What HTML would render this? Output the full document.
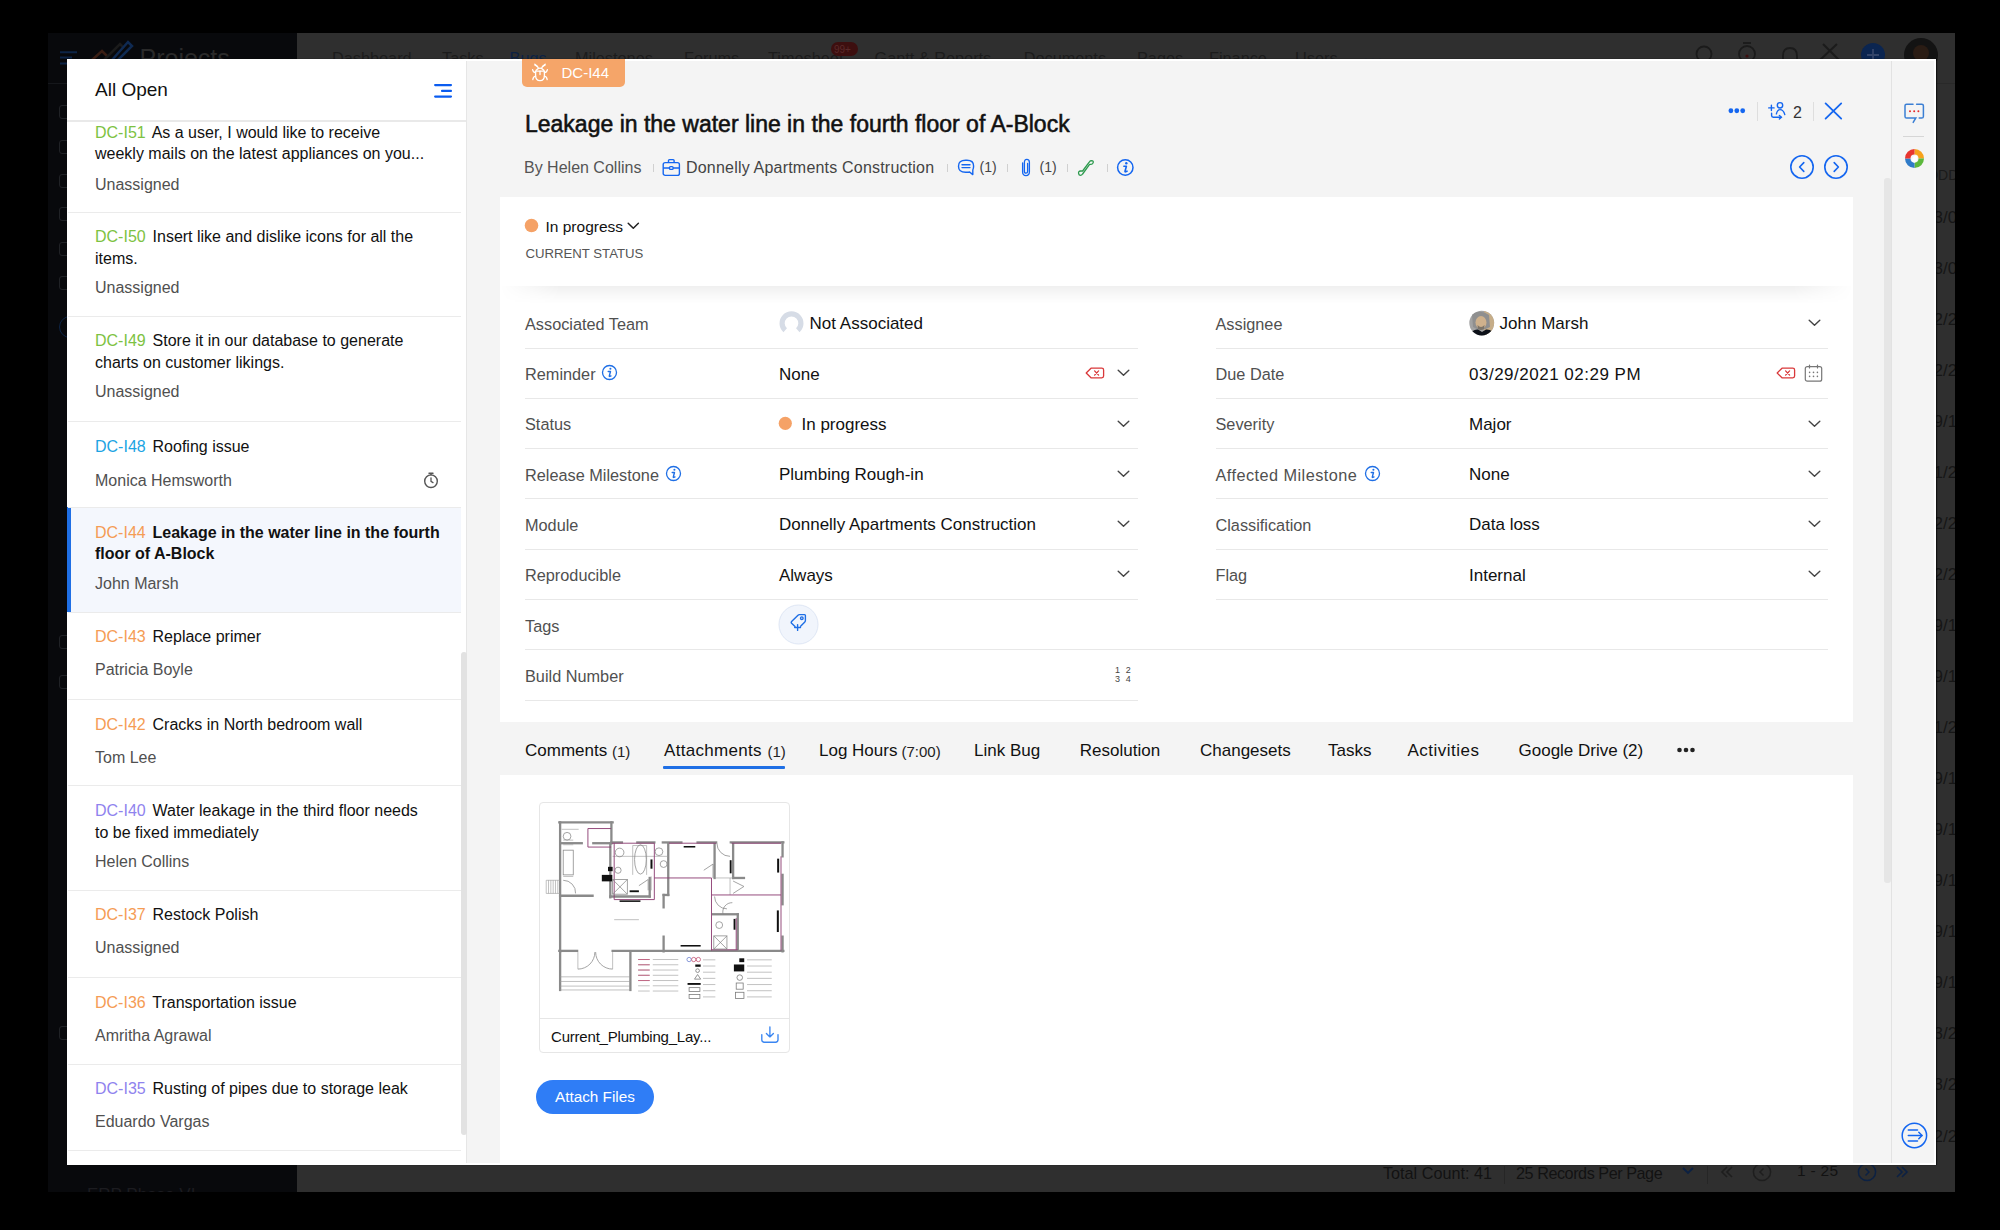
<!DOCTYPE html>
<html><head><meta charset="utf-8"><style>
*{margin:0;padding:0;box-sizing:border-box}
html,body{width:2000px;height:1230px;overflow:hidden;background:#000;font-family:"Liberation Sans",sans-serif}
.r{position:absolute;display:block}
.t{position:absolute;white-space:nowrap}
</style></head><body>
<div class="r" style="left:48px;top:33px;width:249px;height:1159px;background:#08090c;"></div>
<div class="r" style="left:297px;top:33px;width:1658px;height:1159px;background:#2f2f2f;"></div>
<div class="r" style="left:48px;top:33px;width:1907px;height:1159px;overflow:hidden"><div class="r" style="left:-48px;top:-33px;width:2000px;height:1230px"><div class="r" style="left:48px;top:83px;width:249px;height:1px;background:#15171b;"></div>
<div class="r" style="left:297px;top:83px;width:1658px;height:1px;background:#292929;"></div>
<svg class="r" style="left:58px;top:50px;" width="24" height="16" viewBox="0 0 24 16" fill="none"><path d="M2 2.3H19M2 7.5H14M2 13.5H19" stroke="#0d2446" stroke-width="2"/></svg>
<svg class="r" style="left:90px;top:38px;" width="45" height="24" viewBox="0 0 45 24" fill="none"><path d="M2 22L12 13L18 19" stroke="#3a1e14" stroke-width="2.5" fill="none"/><path d="M14 22L30 6L34 10" stroke="#1b1b1b" stroke-width="2.5" fill="none"/><path d="M22 22L38 4L42 8L26 24" stroke="#0f2a52" stroke-width="2.5" fill="none"/></svg>
<div class="t" style="left:139.5px;top:46.34px;font-size:25px;line-height:25px;color:#2a2a2a;font-weight:400;">Projects</div>
<div class="t" style="left:332.0px;top:50.20px;font-size:16.3px;line-height:16.3px;color:#1c1c1c;font-weight:400;">Dashboard</div>
<div class="t" style="left:442.0px;top:50.20px;font-size:16.3px;line-height:16.3px;color:#1c1c1c;font-weight:400;">Tasks</div>
<div class="t" style="left:509.6px;top:50.20px;font-size:16.3px;line-height:16.3px;color:#0c2143;font-weight:400;">Bugs</div>
<div class="t" style="left:575.0px;top:50.20px;font-size:16.3px;line-height:16.3px;color:#1c1c1c;font-weight:400;">Milestones</div>
<div class="t" style="left:684.0px;top:50.20px;font-size:16.3px;line-height:16.3px;color:#1c1c1c;font-weight:400;">Forums</div>
<div class="t" style="left:768.0px;top:50.20px;font-size:16.3px;line-height:16.3px;color:#1c1c1c;font-weight:400;">Timesheet</div>
<div class="t" style="left:874.5px;top:50.20px;font-size:16.3px;line-height:16.3px;color:#1c1c1c;font-weight:400;">Gantt &amp; Reports</div>
<div class="t" style="left:1023.7px;top:50.20px;font-size:16.3px;line-height:16.3px;color:#1c1c1c;font-weight:400;">Documents</div>
<div class="t" style="left:1137.0px;top:50.20px;font-size:16.3px;line-height:16.3px;color:#1c1c1c;font-weight:400;">Pages</div>
<div class="t" style="left:1209.0px;top:50.20px;font-size:16.3px;line-height:16.3px;color:#1c1c1c;font-weight:400;">Finance</div>
<div class="t" style="left:1295.0px;top:50.20px;font-size:16.3px;line-height:16.3px;color:#1c1c1c;font-weight:400;">Users</div>
<svg class="r" style="left:1363px;top:58px;" width="22" height="6" viewBox="0 0 22 6" fill="none"><circle cx="3" cy="3" r="2.2" fill="#0c2143"/><circle cx="10" cy="3" r="2.2" fill="#0c2143"/><circle cx="17" cy="3" r="2.2" fill="#0c2143"/></svg>
<div class="r" style="left:831px;top:42px;width:27px;height:14px;background:#3d0f0f;border-radius:7px"></div>
<div class="t" style="left:834.0px;top:44.53px;font-size:10px;line-height:10px;color:#5a2a2a;font-weight:400;">99+</div>
<svg class="r" style="left:1690px;top:42px;" width="30" height="20" viewBox="0 0 30 20" fill="none"><circle cx="14" cy="12" r="7.5" stroke="#1b1b1b" stroke-width="1.8" fill="none"/></svg>
<svg class="r" style="left:1732px;top:40px;" width="30" height="22" viewBox="0 0 30 22" fill="none"><circle cx="15" cy="14" r="8" stroke="#1b1b1b" stroke-width="1.8" fill="none"/><path d="M11 3H19" stroke="#1b1b1b" stroke-width="1.8"/><circle cx="15" cy="16" r="1.6" fill="#3d0f0f"/></svg>
<svg class="r" style="left:1775px;top:42px;" width="30" height="20" viewBox="0 0 30 20" fill="none"><path d="M8 20V14Q8 6 15 6Q22 6 22 14V20" stroke="#1b1b1b" stroke-width="1.8" fill="none"/></svg>
<svg class="r" style="left:1815px;top:40px;" width="30" height="22" viewBox="0 0 30 22" fill="none"><path d="M5 20L22 4M8 4L24 20" stroke="#1b1b1b" stroke-width="2" fill="none"/></svg>
<svg class="r" style="left:1858px;top:40px;" width="30" height="22" viewBox="0 0 30 22" fill="none"><circle cx="15" cy="15" r="12" fill="#0b2550"/><path d="M15 9V21M9 15H21" stroke="#33456a" stroke-width="1.8"/></svg>
<svg class="r" style="left:1903px;top:37px;" width="36" height="24" viewBox="0 0 36 24" fill="none"><circle cx="18" cy="18" r="17" fill="#131313"/><circle cx="18" cy="16" r="8" fill="#2a1c14"/></svg>
<div class="t" style="left:1928.0px;top:168.15px;font-size:14px;line-height:14px;color:#1a1a1a;font-weight:400;">DDD</div>
<div class="t" style="left:1924.0px;top:208.61px;font-size:17px;line-height:17px;color:#161616;font-weight:400;">03/0</div>
<div class="t" style="left:1924.0px;top:259.66px;font-size:17px;line-height:17px;color:#161616;font-weight:400;">03/0</div>
<div class="t" style="left:1924.0px;top:310.71px;font-size:17px;line-height:17px;color:#161616;font-weight:400;">02/2</div>
<div class="t" style="left:1924.0px;top:361.76px;font-size:17px;line-height:17px;color:#161616;font-weight:400;">02/2</div>
<div class="t" style="left:1924.0px;top:412.81px;font-size:17px;line-height:17px;color:#161616;font-weight:400;">09/1</div>
<div class="t" style="left:1924.0px;top:463.86px;font-size:17px;line-height:17px;color:#161616;font-weight:400;">01/2</div>
<div class="t" style="left:1924.0px;top:514.91px;font-size:17px;line-height:17px;color:#161616;font-weight:400;">02/2</div>
<div class="t" style="left:1924.0px;top:565.96px;font-size:17px;line-height:17px;color:#161616;font-weight:400;">02/2</div>
<div class="t" style="left:1924.0px;top:617.01px;font-size:17px;line-height:17px;color:#161616;font-weight:400;">09/1</div>
<div class="t" style="left:1924.0px;top:668.06px;font-size:17px;line-height:17px;color:#161616;font-weight:400;">09/1</div>
<div class="t" style="left:1924.0px;top:719.11px;font-size:17px;line-height:17px;color:#161616;font-weight:400;">01/2</div>
<div class="t" style="left:1924.0px;top:770.16px;font-size:17px;line-height:17px;color:#161616;font-weight:400;">09/1</div>
<div class="t" style="left:1924.0px;top:821.21px;font-size:17px;line-height:17px;color:#161616;font-weight:400;">09/1</div>
<div class="t" style="left:1924.0px;top:872.26px;font-size:17px;line-height:17px;color:#161616;font-weight:400;">09/1</div>
<div class="t" style="left:1924.0px;top:923.31px;font-size:17px;line-height:17px;color:#161616;font-weight:400;">09/1</div>
<div class="t" style="left:1924.0px;top:974.36px;font-size:17px;line-height:17px;color:#161616;font-weight:400;">09/1</div>
<div class="t" style="left:1924.0px;top:1025.41px;font-size:17px;line-height:17px;color:#161616;font-weight:400;">03/2</div>
<div class="t" style="left:1924.0px;top:1076.46px;font-size:17px;line-height:17px;color:#161616;font-weight:400;">03/2</div>
<div class="t" style="left:1924.0px;top:1127.51px;font-size:17px;line-height:17px;color:#161616;font-weight:400;">02/2</div>
<div class="r" style="left:59px;top:105px;width:14px;height:14px;background:transparent;border:1.5px solid #202226;border-radius:3px"></div>
<div class="r" style="left:59px;top:140px;width:14px;height:14px;background:transparent;border:1.5px solid #202226;border-radius:3px"></div>
<div class="r" style="left:59px;top:174px;width:14px;height:14px;background:transparent;border:1.5px solid #202226;border-radius:3px"></div>
<div class="r" style="left:59px;top:207px;width:14px;height:14px;background:transparent;border:1.5px solid #202226;border-radius:3px"></div>
<div class="r" style="left:59px;top:242px;width:14px;height:14px;background:transparent;border:1.5px solid #202226;border-radius:3px"></div>
<div class="r" style="left:59px;top:276px;width:14px;height:14px;background:transparent;border:1.5px solid #202226;border-radius:3px"></div>
<div class="r" style="left:59px;top:635px;width:14px;height:14px;background:transparent;border:1.5px solid #202226;border-radius:3px"></div>
<div class="r" style="left:59px;top:675px;width:14px;height:14px;background:transparent;border:1.5px solid #202226;border-radius:3px"></div>
<div class="r" style="left:59px;top:1026px;width:14px;height:14px;background:transparent;border:1.5px solid #202226;border-radius:3px"></div>
<div class="r" style="left:59px;top:316px;width:22px;height:22px;background:transparent;border:1.5px solid #0d2446;border-radius:50%"></div>
<div class="t" style="left:1383.0px;top:1164.59px;font-size:16.2px;line-height:16.2px;color:#121212;font-weight:400;">Total Count: 41</div>
<div class="r" style="left:1504px;top:1166px;width:1px;height:18px;background:#262626;"></div>
<div class="t" style="left:1516.0px;top:1164.59px;font-size:16.2px;line-height:16.2px;color:#121212;font-weight:400;letter-spacing:-0.45px">25 Records Per Page</div>
<svg class="r" style="left:1681px;top:1166px;" width="14" height="10" viewBox="0 0 14 10" fill="none"><path d="M2 2L7 7L12 2" stroke="#0c2143" stroke-width="1.8" fill="none"/></svg>
<div class="r" style="left:1707px;top:1166px;width:1px;height:18px;background:#262626;"></div>
<svg class="r" style="left:1719px;top:1164px;" width="16" height="16" viewBox="0 0 16 16" fill="none"><path d="M8 3L3 8L8 13M13 3L8 8L13 13" stroke="#1e1e1e" stroke-width="1.6" fill="none"/></svg>
<svg class="r" style="left:1752px;top:1162px;" width="20" height="20" viewBox="0 0 20 20" fill="none"><circle cx="10" cy="10" r="8.6" stroke="#1e1e1e" stroke-width="1.5" fill="none"/><path d="M11.5 6.5L8 10L11.5 13.5" stroke="#1e1e1e" stroke-width="1.5" fill="none"/></svg>
<div class="t" style="left:1797.0px;top:1163.38px;font-size:15.5px;line-height:15.5px;color:#121212;font-weight:400;letter-spacing:0.3px">1 - 25</div>
<svg class="r" style="left:1857px;top:1162px;" width="20" height="20" viewBox="0 0 20 20" fill="none"><circle cx="10" cy="10" r="8.6" stroke="#0c2143" stroke-width="1.5" fill="none"/><path d="M8.5 6.5L12 10L8.5 13.5" stroke="#0c2143" stroke-width="1.5" fill="none"/></svg>
<svg class="r" style="left:1894px;top:1164px;" width="16" height="16" viewBox="0 0 16 16" fill="none"><path d="M3 3L8 8L3 13M8 3L13 8L8 13" stroke="#0c2143" stroke-width="1.6" fill="none"/></svg>
<div class="t" style="left:87.0px;top:1185.61px;font-size:17px;line-height:17px;color:#1c1c20;font-weight:400;">ERP Phase VI</div>
</div></div><div class="r" style="left:67px;top:59px;width:1869px;height:1106px;background:#ffffff;box-shadow:1px 0 1px rgba(0,0,0,0.6)"></div>
<div class="r" style="left:467px;top:61px;width:1424px;height:1102px;background:#f4f4f4;"></div>
<div class="r" style="left:1891px;top:61px;width:43px;height:1102px;background:#f4f4f4;border-left:1px solid #e2e2e2"></div>
<div class="r" style="left:0;top:0;width:2000px;height:1230px;overflow:hidden"><div class="t" style="left:95.0px;top:80.42px;font-size:19px;line-height:19px;color:#111;font-weight:400;">All Open</div>
<svg class="r" style="left:432px;top:82px;" width="22" height="18" viewBox="0 0 22 18" fill="none"><path d="M3.1 3.1H19M10 8.9H19M3.1 14.6H19" stroke="#0b5cf0" stroke-width="2.1" stroke-linecap="round"/></svg>
<div class="r" style="left:67px;top:120px;width:400px;height:2px;background:#e9e9e9;"></div>
<div class="r" style="left:466px;top:61px;width:1px;height:1102px;background:#e6e6e6;"></div>
<div class="r" style="left:67px;top:507px;width:394px;height:105px;background:#f4f7fd;"></div>
<div class="r" style="left:67px;top:507px;width:4px;height:105px;background:#1f6fe5;"></div>
<div class="t" style="left:95.0px;top:125.06px;font-size:16px;line-height:16px;color:#111;font-weight:400;letter-spacing:0px"><span style="color:#7dc242;font-weight:400">DC-I51</span><span style="margin-left:2.4px"> </span>As a user, I would like to receive</div>
<div class="t" style="left:95.0px;top:146.26px;font-size:16px;line-height:16px;color:#111;font-weight:400;">weekly mails on the latest appliances on you...</div>
<div class="t" style="left:95.0px;top:176.86px;font-size:16px;line-height:16px;color:#505050;font-weight:400;">Unassigned</div>
<div class="r" style="left:68px;top:212px;width:393px;height:1px;background:#ebebeb;"></div>
<div class="t" style="left:95.0px;top:229.06px;font-size:16px;line-height:16px;color:#111;font-weight:400;letter-spacing:0px"><span style="color:#7dc242;font-weight:400">DC-I50</span><span style="margin-left:2.4px"> </span>Insert like and dislike icons for all the</div>
<div class="t" style="left:95.0px;top:250.66px;font-size:16px;line-height:16px;color:#111;font-weight:400;">items.</div>
<div class="t" style="left:95.0px;top:280.06px;font-size:16px;line-height:16px;color:#505050;font-weight:400;">Unassigned</div>
<div class="r" style="left:68px;top:316px;width:393px;height:1px;background:#ebebeb;"></div>
<div class="t" style="left:95.0px;top:333.46px;font-size:16px;line-height:16px;color:#111;font-weight:400;letter-spacing:0px"><span style="color:#7dc242;font-weight:400">DC-I49</span><span style="margin-left:2.4px"> </span>Store it in our database to generate</div>
<div class="t" style="left:95.0px;top:355.06px;font-size:16px;line-height:16px;color:#111;font-weight:400;">charts on customer likings.</div>
<div class="t" style="left:95.0px;top:384.46px;font-size:16px;line-height:16px;color:#505050;font-weight:400;">Unassigned</div>
<div class="r" style="left:68px;top:421px;width:393px;height:1px;background:#ebebeb;"></div>
<div class="t" style="left:95.0px;top:438.86px;font-size:16px;line-height:16px;color:#111;font-weight:400;letter-spacing:0px"><span style="color:#1ca4e3;font-weight:400">DC-I48</span><span style="margin-left:2.4px"> </span>Roofing issue</div>
<div class="t" style="left:95.0px;top:472.86px;font-size:16px;line-height:16px;color:#505050;font-weight:400;">Monica Hemsworth</div>
<div class="r" style="left:68px;top:507px;width:393px;height:1px;background:#ebebeb;"></div>
<div class="t" style="left:95.0px;top:524.96px;font-size:16px;line-height:16px;color:#111;font-weight:700;letter-spacing:0px"><span style="color:#f59c55;font-weight:400">DC-I44</span><span style="margin-left:2.4px"> </span>Leakage in the water line in the fourth</div>
<div class="t" style="left:95.0px;top:546.26px;font-size:16px;line-height:16px;color:#111;font-weight:700;">floor of A-Block</div>
<div class="t" style="left:95.0px;top:576.26px;font-size:16px;line-height:16px;color:#505050;font-weight:400;">John Marsh</div>
<div class="r" style="left:68px;top:612px;width:393px;height:1px;background:#ebebeb;"></div>
<div class="t" style="left:95.0px;top:629.16px;font-size:16px;line-height:16px;color:#111;font-weight:400;letter-spacing:0px"><span style="color:#f59c55;font-weight:400">DC-I43</span><span style="margin-left:2.4px"> </span>Replace primer</div>
<div class="t" style="left:95.0px;top:662.26px;font-size:16px;line-height:16px;color:#505050;font-weight:400;">Patricia Boyle</div>
<div class="r" style="left:68px;top:699px;width:393px;height:1px;background:#ebebeb;"></div>
<div class="t" style="left:95.0px;top:716.66px;font-size:16px;line-height:16px;color:#111;font-weight:400;letter-spacing:0px"><span style="color:#f59c55;font-weight:400">DC-I42</span><span style="margin-left:2.4px"> </span>Cracks in North bedroom wall</div>
<div class="t" style="left:95.0px;top:750.46px;font-size:16px;line-height:16px;color:#505050;font-weight:400;">Tom Lee</div>
<div class="r" style="left:68px;top:785px;width:393px;height:1px;background:#ebebeb;"></div>
<div class="t" style="left:95.0px;top:803.36px;font-size:16px;line-height:16px;color:#111;font-weight:400;letter-spacing:0px"><span style="color:#8f83ee;font-weight:400">DC-I40</span><span style="margin-left:2.4px"> </span>Water leakage in the third floor needs</div>
<div class="t" style="left:95.0px;top:824.76px;font-size:16px;line-height:16px;color:#111;font-weight:400;">to be fixed immediately</div>
<div class="t" style="left:95.0px;top:854.06px;font-size:16px;line-height:16px;color:#505050;font-weight:400;">Helen Collins</div>
<div class="r" style="left:68px;top:890px;width:393px;height:1px;background:#ebebeb;"></div>
<div class="t" style="left:95.0px;top:907.46px;font-size:16px;line-height:16px;color:#111;font-weight:400;letter-spacing:0px"><span style="color:#f59c55;font-weight:400">DC-I37</span><span style="margin-left:2.4px"> </span>Restock Polish</div>
<div class="t" style="left:95.0px;top:940.46px;font-size:16px;line-height:16px;color:#505050;font-weight:400;">Unassigned</div>
<div class="r" style="left:68px;top:977px;width:393px;height:1px;background:#ebebeb;"></div>
<div class="t" style="left:95.0px;top:994.56px;font-size:16px;line-height:16px;color:#111;font-weight:400;letter-spacing:0px"><span style="color:#f59c55;font-weight:400">DC-I36</span><span style="margin-left:2.4px"> </span>Transportation issue</div>
<div class="t" style="left:95.0px;top:1027.76px;font-size:16px;line-height:16px;color:#505050;font-weight:400;">Amritha Agrawal</div>
<div class="r" style="left:68px;top:1064px;width:393px;height:1px;background:#ebebeb;"></div>
<div class="t" style="left:95.0px;top:1081.26px;font-size:16px;line-height:16px;color:#111;font-weight:400;letter-spacing:0px"><span style="color:#8f83ee;font-weight:400">DC-I35</span><span style="margin-left:2.4px"> </span>Rusting of pipes due to storage leak</div>
<div class="t" style="left:95.0px;top:1113.66px;font-size:16px;line-height:16px;color:#505050;font-weight:400;">Eduardo Vargas</div>
<div class="r" style="left:68px;top:1150px;width:393px;height:1px;background:#ebebeb;"></div>
<svg class="r" style="left:423px;top:471px;" width="16" height="18" viewBox="0 0 16 18" fill="none"><circle cx="8" cy="10.2" r="6.3" stroke="#555" stroke-width="1.4"/><path d="M8 6.8V10.4L10 11.6" stroke="#555" stroke-width="1.3" stroke-linecap="round"/><path d="M6 2.2H10M8 2.2V3.9" stroke="#555" stroke-width="1.4" stroke-linecap="round"/></svg>
<div class="r" style="left:461px;top:652px;width:6px;height:483px;background:#e2e2e2;border-radius:3px"></div>
<div class="r" style="left:522px;top:59px;width:103px;height:28px;background:#f5a569;border-radius:0 0 5px 5px"></div>
<svg class="r" style="left:531px;top:63px;" width="18" height="19" viewBox="0 0 18 19" fill="none"><g stroke="#fff" stroke-width="1.3" stroke-linecap="round" fill="none">
<path d="M5.2 7.2Q9 3.2 12.8 7.2"/><path d="M4.6 8.2H13.4V12.5Q13.4 17.6 9 17.6Q4.6 17.6 4.6 12.5Z"/>
<path d="M9 8.2V11.5"/><path d="M6.6 3.4L3.8 1.2M11.4 3.4L14.2 1.2"/><path d="M7.2 4.6Q5.6 2.8 4 2.2M10.8 4.6Q12.4 2.8 14 2.2"/>
<path d="M4.6 9.6Q2 9.2 1.6 6.6M13.4 9.6Q16 9.2 16.4 6.6M4.6 13.2Q2.2 13.6 1.8 16.6M13.4 13.2Q15.8 13.6 16.2 16.6"/>
</g></svg>
<div class="t" style="left:561.5px;top:65.30px;font-size:15px;line-height:15px;color:#fff;font-weight:400;">DC-I44</div>
<div class="t" style="left:525.0px;top:112.53px;font-size:23px;line-height:23px;color:#111;font-weight:400;-webkit-text-stroke:0.55px #111">Leakage in the water line in the fourth floor of A-Block</div>
<div class="t" style="left:524.0px;top:160.26px;font-size:16px;line-height:16px;color:#555;font-weight:400;">By Helen Collins</div>
<div class="r" style="left:652.5px;top:164px;width:1.0px;height:8px;background:#d0d0d0;"></div>
<div class="r" style="left:946.5px;top:164px;width:1.0px;height:8px;background:#d0d0d0;"></div>
<div class="r" style="left:1006.5px;top:164px;width:1.0px;height:8px;background:#d0d0d0;"></div>
<div class="r" style="left:1066.5px;top:164px;width:1.0px;height:8px;background:#d0d0d0;"></div>
<div class="r" style="left:1106.5px;top:164px;width:1.0px;height:8px;background:#d0d0d0;"></div>
<svg class="r" style="left:662px;top:158px;" width="19" height="19" viewBox="0 0 19 19" fill="none"><g stroke="#1466f0" stroke-width="1.4" fill="none"><rect x="1.2" y="4.6" width="16.2" height="12.8" rx="2"/><path d="M6.5 4.6V2.6Q6.5 1.6 7.5 1.6H11.1Q12.1 1.6 12.1 2.6V4.6"/><path d="M1.2 10H7.5M11.1 10H17.4"/><rect x="7.5" y="8.6" width="3.6" height="2.8" rx="1"/></g></svg>
<div class="t" style="left:686.0px;top:160.26px;font-size:16px;line-height:16px;color:#444;font-weight:400;letter-spacing:0.2px">Donnelly Apartments Construction</div>
<svg class="r" style="left:957px;top:159px;" width="18" height="17" viewBox="0 0 18 17" fill="none"><g stroke="#1466f0" stroke-width="1.4" fill="none" stroke-linejoin="round"><path d="M8.6 1.3H10Q16.6 1.3 16.6 7Q16.6 9.6 15.8 11V15.6L12.6 13Q11.4 13.2 10 13.2H8.6Q1.5 13.2 1.5 7.2Q1.5 1.3 8.6 1.3Z"/><path d="M5 5.7H13M5 8.6H13" stroke-linecap="round"/></g></svg>
<div class="t" style="left:979.5px;top:160.35px;font-size:14px;line-height:14px;color:#444;font-weight:400;">(1)</div>
<svg class="r" style="left:1020px;top:158px;" width="12" height="19" viewBox="0 0 12 19" fill="none"><path d="M7.6 5.5V13.6Q7.6 15.2 6 15.2Q4.4 15.2 4.4 13.6V4.4Q4.4 1.4 6.8 1.4Q9.4 1.4 9.4 4.4V13.8Q9.4 17.6 6 17.6Q2.6 17.6 2.6 13.8V5" stroke="#1466f0" stroke-width="1.3" fill="none" stroke-linecap="round"/></svg>
<div class="t" style="left:1039.5px;top:160.35px;font-size:14px;line-height:14px;color:#444;font-weight:400;">(1)</div>
<svg class="r" style="left:1077px;top:159px;" width="18" height="18" viewBox="0 0 18 18" fill="none"><path d="M1.6 14.4Q1.2 12.2 3.6 12H5.6L12.4 2.8Q13.2 1.6 14.6 1.6Q16.6 1.8 16.2 3.6Q15.8 5.2 14 5.4H12.6L5.6 15Q4.8 16.4 3.2 16.4Q1.8 16.2 1.6 14.4Z" stroke="#2d9a4e" stroke-width="1.3" fill="none" stroke-linejoin="round"/></svg>
<svg class="r" style="left:1116px;top:158px;" width="19" height="19" viewBox="0 0 19 19" fill="none"><circle cx="9.3" cy="9.5" r="7.7" stroke="#1466f0" stroke-width="1.5"/><circle cx="10.3" cy="5.3" r="1.2" fill="#1466f0"/><path d="M7.9 8.2H10.4L9 13.2Q8.8 14 9.6 13.8L11 13.2" stroke="#1466f0" stroke-width="1.6" fill="none" stroke-linecap="round" stroke-linejoin="round"/></svg>
<svg class="r" style="left:1726px;top:106px;" width="22" height="10" viewBox="0 0 22 10" fill="none"><circle cx="4.9" cy="4.75" r="2.4" fill="#1466f0"/><circle cx="10.8" cy="4.75" r="2.4" fill="#1466f0"/><circle cx="16.7" cy="4.75" r="2.4" fill="#1466f0"/></svg>
<div class="r" style="left:1757px;top:102px;width:1px;height:19px;background:#dedede;"></div>
<svg class="r" style="left:1767px;top:100px;" width="22" height="20" viewBox="0 0 22 20" fill="none"><g stroke="#1466f0" stroke-width="1.4" fill="none" stroke-linecap="round"><path d="M4.4 5.2V10.6M1.7 7.9H7.1"/><circle cx="13" cy="5.3" r="2.7"/><path d="M9.4 13.8Q10.4 9.6 13 9.6Q16.4 9.6 17.8 14.6"/><path d="M4.6 13.2V15.6Q4.6 17.2 6.2 17.2H14"/><path d="M12.4 15.4L14.4 17.2L12.4 19"/></g></svg>
<div class="t" style="left:1793.0px;top:104.56px;font-size:16px;line-height:16px;color:#333;font-weight:400;">2</div>
<div class="r" style="left:1813px;top:102px;width:1px;height:19px;background:#dedede;"></div>
<svg class="r" style="left:1823px;top:101px;" width="21" height="20" viewBox="0 0 21 20" fill="none"><path d="M2.6 2.4L18.2 17.6M18.2 2.4L2.6 17.6" stroke="#1466f0" stroke-width="1.8" stroke-linecap="round"/></svg>
<svg class="r" style="left:1789px;top:154px;" width="26" height="26" viewBox="0 0 26 26" fill="none"><circle cx="13" cy="13" r="11.2" stroke="#1466f0" stroke-width="1.6"/><path d="M14.8 8.6L10.6 13L14.8 17.4" stroke="#1466f0" stroke-width="1.6" fill="none" stroke-linecap="round" stroke-linejoin="round"/></svg>
<svg class="r" style="left:1823px;top:154px;" width="26" height="26" viewBox="0 0 26 26" fill="none"><circle cx="13" cy="13" r="11.2" stroke="#1466f0" stroke-width="1.6"/><path d="M11.2 8.6L15.4 13L11.2 17.4" stroke="#1466f0" stroke-width="1.6" fill="none" stroke-linecap="round" stroke-linejoin="round"/></svg>
<svg class="r" style="left:1902px;top:101px;" width="24" height="24" viewBox="0 0 24 24" fill="none"><path d="M11 3.2H4.6Q3 3.2 3 4.8V15.4Q3 17 4.6 17H13.8L11.2 21.4M17.2 17H19.6Q21.4 17 21.4 15.4V4.8Q21.4 3.2 19.8 3.2H14.6" stroke="#3b7fd4" stroke-width="1.5" fill="none" stroke-linecap="round"/><circle cx="8" cy="10.3" r="1" fill="#e52b2b"/><circle cx="12.2" cy="10.3" r="1" fill="#e52b2b"/><circle cx="16.4" cy="10.3" r="1" fill="#e52b2b"/></svg>
<div class="r" style="left:1903px;top:136px;width:21px;height:1px;background:#d6d6d6;"></div>
<svg class="r" style="left:1904px;top:148px;" width="21" height="21" viewBox="0 0 21 21" fill="none"><g transform="translate(10.5 10.5)">
<path d="M0 -9.5A9.5 9.5 0 0 1 9.5 0L4 0A4 4 0 0 0 0 -4Z" fill="#f7a21b"/>
<path d="M9.5 0A9.5 9.5 0 0 1 0 9.5L0 4A4 4 0 0 0 4 0Z" fill="#5cb83c"/>
<path d="M0 9.5A9.5 9.5 0 0 1 -9.5 0L-4 0A4 4 0 0 0 0 4Z" fill="#2f7bc8"/>
<path d="M-9.5 0A9.5 9.5 0 0 1 0 -9.5L0 -4A4 4 0 0 0 -4 0Z" fill="#e8352e"/>
<ellipse cx="0.5" cy="0.5" rx="2.4" ry="3.6" fill="#fff" transform="rotate(20)"/>
</g></svg>
<svg class="r" style="left:1900px;top:1121px;" width="29" height="29" viewBox="0 0 29 29" fill="none"><circle cx="14.4" cy="14.5" r="12.2" stroke="#1466f0" stroke-width="1.5"/><path d="M8.3 9.1H17.5M8.3 14.5H22M8.3 20.1H17.5" stroke="#1466f0" stroke-width="1.5" stroke-linecap="round"/><path d="M18.8 11.2L22 14.5L18.8 17.8" stroke="#1466f0" stroke-width="1.5" fill="none" stroke-linecap="round" stroke-linejoin="round"/></svg>
<div class="r" style="left:1884px;top:178px;width:7px;height:705px;background:#e6e6e6;border-radius:3px"></div>
<div class="r" style="left:500px;top:197px;width:1353px;height:525px;background:#ffffff;"></div>
<div class="r" style="left:500px;top:286px;width:1353px;height:18px;background:linear-gradient(rgba(0,0,0,0.06),rgba(0,0,0,0.02) 60%,rgba(0,0,0,0));-webkit-mask-image:linear-gradient(to right,transparent 0,#000 60px,#000 calc(100% - 60px),transparent 100%)"></div>
<div class="r" style="left:500px;top:197px;width:1353px;height:89px;z-index:2"><svg class="r" style="left:24px;top:21px;" width="15" height="15" viewBox="0 0 15 15" fill="none"><circle cx="7.5" cy="7.5" r="6.8" fill="#f5a267"/></svg>
<div class="t" style="left:45.5px;top:22.28px;font-size:15.5px;line-height:15.5px;color:#111;font-weight:400;">In progress</div>
<svg class="r" style="left:127px;top:25px;" width="13" height="8" viewBox="0 0 13 8" fill="none"><path d="M1.2 1.2L6.3 6.2L11.4 1.2" stroke="#222" stroke-width="1.5" fill="none" stroke-linecap="round" stroke-linejoin="round"/></svg>
<div class="t" style="left:25.4px;top:49.53px;font-size:13.2px;line-height:13.2px;color:#555;font-weight:400;">CURRENT STATUS</div>
</div><div class="t" style="left:525.0px;top:315.84px;font-size:16.3px;line-height:16.3px;color:#505050;font-weight:400;">Associated Team</div>
<svg class="r" style="left:778px;top:308px;" width="27" height="27" viewBox="0 0 27 27" fill="none"><path d="M7.2 22.2A9.4 9.4 0 1 1 19.8 22.2" stroke="#d6dce6" stroke-width="5.2" fill="none"/></svg>
<div class="t" style="left:809.6px;top:315.25px;font-size:17px;line-height:17px;color:#111;font-weight:400;">Not Associated</div>
<div class="r" style="left:525px;top:348px;width:613px;height:1px;background:#e8e8e8;"></div>
<div class="t" style="left:525.0px;top:366.12px;font-size:16.3px;line-height:16.3px;color:#505050;font-weight:400;">Reminder</div>
<svg class="r" style="left:601px;top:364px;" width="17" height="17" viewBox="0 0 17 17" fill="none"><circle cx="8.5" cy="8.5" r="7" stroke="#1f6fe5" stroke-width="1.3"/><circle cx="9.4" cy="4.8" r="1.05" fill="#1f6fe5"/><path d="M7.2 7.5H9.5L8.3 11.9Q8.1 12.6 8.8 12.4L10 11.9" stroke="#1f6fe5" stroke-width="1.4" fill="none" stroke-linecap="round" stroke-linejoin="round"/></svg>
<div class="t" style="left:779.0px;top:365.53px;font-size:17px;line-height:17px;color:#111;font-weight:400;">None</div>
<svg class="r" style="left:1117px;top:369px;" width="13" height="8" viewBox="0 0 13 8" fill="none"><path d="M1.2 1.2L6.5 6.3L11.8 1.2" stroke="#444" stroke-width="1.4" fill="none" stroke-linecap="round" stroke-linejoin="round"/></svg>
<svg class="r" style="left:1085px;top:367px;" width="20" height="12" viewBox="0 0 20 12" fill="none"><path d="M6 1.2H16.8Q18.6 1.2 18.6 3V9Q18.6 10.8 16.8 10.8H6L1.2 6Z" stroke="#d9383a" stroke-width="1.3" fill="none" stroke-linejoin="round"/><path d="M9.6 3.9L13.6 8.1M13.6 3.9L9.6 8.1" stroke="#d9383a" stroke-width="1.3" stroke-linecap="round"/></svg>
<div class="r" style="left:525px;top:398px;width:613px;height:1px;background:#e8e8e8;"></div>
<div class="t" style="left:525.0px;top:416.40px;font-size:16.3px;line-height:16.3px;color:#505050;font-weight:400;">Status</div>
<svg class="r" style="left:778px;top:416px;" width="15" height="15" viewBox="0 0 15 15" fill="none"><circle cx="7.3" cy="7.3" r="6.6" fill="#f5a267"/></svg>
<div class="t" style="left:801.5px;top:415.81px;font-size:17px;line-height:17px;color:#111;font-weight:400;">In progress</div>
<svg class="r" style="left:1117px;top:420px;" width="13" height="8" viewBox="0 0 13 8" fill="none"><path d="M1.2 1.2L6.5 6.3L11.8 1.2" stroke="#444" stroke-width="1.4" fill="none" stroke-linecap="round" stroke-linejoin="round"/></svg>
<div class="r" style="left:525px;top:448px;width:613px;height:1px;background:#e8e8e8;"></div>
<div class="t" style="left:525.0px;top:466.68px;font-size:16.3px;line-height:16.3px;color:#505050;font-weight:400;">Release Milestone</div>
<svg class="r" style="left:665px;top:465px;" width="17" height="17" viewBox="0 0 17 17" fill="none"><circle cx="8.5" cy="8.5" r="7" stroke="#1f6fe5" stroke-width="1.3"/><circle cx="9.4" cy="4.8" r="1.05" fill="#1f6fe5"/><path d="M7.2 7.5H9.5L8.3 11.9Q8.1 12.6 8.8 12.4L10 11.9" stroke="#1f6fe5" stroke-width="1.4" fill="none" stroke-linecap="round" stroke-linejoin="round"/></svg>
<div class="t" style="left:779.0px;top:466.09px;font-size:17px;line-height:17px;color:#111;font-weight:400;">Plumbing Rough-in</div>
<svg class="r" style="left:1117px;top:470px;" width="13" height="8" viewBox="0 0 13 8" fill="none"><path d="M1.2 1.2L6.5 6.3L11.8 1.2" stroke="#444" stroke-width="1.4" fill="none" stroke-linecap="round" stroke-linejoin="round"/></svg>
<div class="r" style="left:525px;top:498px;width:613px;height:1px;background:#e8e8e8;"></div>
<div class="t" style="left:525.0px;top:516.96px;font-size:16.3px;line-height:16.3px;color:#505050;font-weight:400;">Module</div>
<div class="t" style="left:779.0px;top:516.37px;font-size:17px;line-height:17px;color:#111;font-weight:400;">Donnelly Apartments Construction</div>
<svg class="r" style="left:1117px;top:520px;" width="13" height="8" viewBox="0 0 13 8" fill="none"><path d="M1.2 1.2L6.5 6.3L11.8 1.2" stroke="#444" stroke-width="1.4" fill="none" stroke-linecap="round" stroke-linejoin="round"/></svg>
<div class="r" style="left:525px;top:549px;width:613px;height:1px;background:#e8e8e8;"></div>
<div class="t" style="left:525.0px;top:567.24px;font-size:16.3px;line-height:16.3px;color:#505050;font-weight:400;">Reproducible</div>
<div class="t" style="left:779.0px;top:566.65px;font-size:17px;line-height:17px;color:#111;font-weight:400;">Always</div>
<svg class="r" style="left:1117px;top:570px;" width="13" height="8" viewBox="0 0 13 8" fill="none"><path d="M1.2 1.2L6.5 6.3L11.8 1.2" stroke="#444" stroke-width="1.4" fill="none" stroke-linecap="round" stroke-linejoin="round"/></svg>
<div class="r" style="left:525px;top:599px;width:613px;height:1px;background:#e8e8e8;"></div>
<div class="t" style="left:525.0px;top:617.52px;font-size:16.3px;line-height:16.3px;color:#505050;font-weight:400;">Tags</div>
<svg class="r" style="left:778px;top:604px;" width="41" height="41" viewBox="0 0 41 41" fill="none"><circle cx="20.5" cy="20.5" r="19.5" fill="#f1f5fc" stroke="#dfe7f5" stroke-width="1"/><g stroke="#1f6fe5" stroke-width="1.4" fill="none" stroke-linecap="round" stroke-linejoin="round"><path d="M17 22.6L13.6 19.2Q12.8 18.4 13.6 17.6L20 11.2Q20.6 10.6 21.4 10.6H26.6Q27.4 10.6 27.4 11.4V16.6Q27.4 17.4 26.8 18L22.6 22.2"/><circle cx="23.8" cy="14.2" r="1.3"/><path d="M19.6 20.6V26.4M16.7 23.5H22.5"/></g></svg>
<div class="r" style="left:525px;top:649px;width:1303px;height:1px;background:#e8e8e8;"></div>
<div class="t" style="left:525.0px;top:667.80px;font-size:16.3px;line-height:16.3px;color:#505050;font-weight:400;">Build Number</div>
<div class="t" style="left:1115px;top:666px;font-size:9px;line-height:9px;color:#444;letter-spacing:1.6px">1 2<br>3 4</div>
<div class="r" style="left:525px;top:700px;width:613px;height:1px;background:#e8e8e8;"></div>
<div class="t" style="left:1215.5px;top:315.84px;font-size:16.3px;line-height:16.3px;color:#505050;font-weight:400;">Assignee</div>
<svg class="r" style="left:1469px;top:310px;" width="26" height="26" viewBox="0 0 26 26" fill="none"><defs><clipPath id="av"><circle cx="12.7" cy="13.1" r="12.4"/></clipPath></defs>
<g clip-path="url(#av)"><rect width="26" height="26" fill="#a3a3a3"/><rect x="15" width="11" height="26" fill="#c6ad88"/><path d="M3 4Q12 -1 20 5L21 17Q12 22 4 17Z" fill="#8f8f8f"/><ellipse cx="12" cy="12.5" rx="5.5" ry="6.5" fill="#cfb18c"/><path d="M8.5 15Q12 19 15.5 15L15 19Q12 21 9 19Z" fill="#7c7468"/><path d="M0 26Q3 19 9 19.5L13 22L17 19.5Q24 19 26 26Z" fill="#0c1018"/></g></svg>
<div class="t" style="left:1499.6px;top:315.25px;font-size:17px;line-height:17px;color:#111;font-weight:400;">John Marsh</div>
<svg class="r" style="left:1807.5px;top:319px;" width="13" height="8" viewBox="0 0 13 8" fill="none"><path d="M1.2 1.2L6.5 6.3L11.8 1.2" stroke="#444" stroke-width="1.4" fill="none" stroke-linecap="round" stroke-linejoin="round"/></svg>
<div class="r" style="left:1216px;top:348px;width:612px;height:1px;background:#e8e8e8;"></div>
<div class="t" style="left:1215.5px;top:366.12px;font-size:16.3px;line-height:16.3px;color:#505050;font-weight:400;">Due Date</div>
<div class="t" style="left:1469.0px;top:365.53px;font-size:17px;line-height:17px;color:#111;font-weight:400;letter-spacing:0.5px">03/29/2021 02:29 PM</div>
<svg class="r" style="left:1776px;top:367px;" width="20" height="12" viewBox="0 0 20 12" fill="none"><path d="M6 1.2H16.8Q18.6 1.2 18.6 3V9Q18.6 10.8 16.8 10.8H6L1.2 6Z" stroke="#d9383a" stroke-width="1.3" fill="none" stroke-linejoin="round"/><path d="M9.6 3.9L13.6 8.1M13.6 3.9L9.6 8.1" stroke="#d9383a" stroke-width="1.3" stroke-linecap="round"/></svg>
<svg class="r" style="left:1804px;top:364px;" width="19" height="18" viewBox="0 0 19 18" fill="none"><rect x="1.3" y="2.6" width="16.4" height="14.6" rx="2" stroke="#777" stroke-width="1.2" fill="none"/><path d="M5.5 1V4M13.5 1V4" stroke="#777" stroke-width="1.2" stroke-linecap="round"/><g fill="#777"><circle cx="5.6" cy="8.4" r="0.8"/><circle cx="9.5" cy="8.4" r="0.8"/><circle cx="13.4" cy="8.4" r="0.8"/><circle cx="5.6" cy="12.4" r="0.8"/><circle cx="9.5" cy="12.4" r="0.8"/><circle cx="13.4" cy="12.4" r="0.8"/></g></svg>
<div class="r" style="left:1216px;top:398px;width:612px;height:1px;background:#e8e8e8;"></div>
<div class="t" style="left:1215.5px;top:416.40px;font-size:16.3px;line-height:16.3px;color:#505050;font-weight:400;">Severity</div>
<div class="t" style="left:1469.0px;top:415.81px;font-size:17px;line-height:17px;color:#111;font-weight:400;">Major</div>
<svg class="r" style="left:1807.5px;top:420px;" width="13" height="8" viewBox="0 0 13 8" fill="none"><path d="M1.2 1.2L6.5 6.3L11.8 1.2" stroke="#444" stroke-width="1.4" fill="none" stroke-linecap="round" stroke-linejoin="round"/></svg>
<div class="r" style="left:1216px;top:448px;width:612px;height:1px;background:#e8e8e8;"></div>
<div class="t" style="left:1215.5px;top:466.68px;font-size:16.3px;line-height:16.3px;color:#505050;font-weight:400;letter-spacing:0.45px">Affected Milestone</div>
<svg class="r" style="left:1364px;top:465px;" width="17" height="17" viewBox="0 0 17 17" fill="none"><circle cx="8.5" cy="8.5" r="7" stroke="#1f6fe5" stroke-width="1.3"/><circle cx="9.4" cy="4.8" r="1.05" fill="#1f6fe5"/><path d="M7.2 7.5H9.5L8.3 11.9Q8.1 12.6 8.8 12.4L10 11.9" stroke="#1f6fe5" stroke-width="1.4" fill="none" stroke-linecap="round" stroke-linejoin="round"/></svg>
<div class="t" style="left:1469.0px;top:466.09px;font-size:17px;line-height:17px;color:#111;font-weight:400;">None</div>
<svg class="r" style="left:1807.5px;top:470px;" width="13" height="8" viewBox="0 0 13 8" fill="none"><path d="M1.2 1.2L6.5 6.3L11.8 1.2" stroke="#444" stroke-width="1.4" fill="none" stroke-linecap="round" stroke-linejoin="round"/></svg>
<div class="r" style="left:1216px;top:498px;width:612px;height:1px;background:#e8e8e8;"></div>
<div class="t" style="left:1215.5px;top:516.96px;font-size:16.3px;line-height:16.3px;color:#505050;font-weight:400;">Classification</div>
<div class="t" style="left:1469.0px;top:516.37px;font-size:17px;line-height:17px;color:#111;font-weight:400;">Data loss</div>
<svg class="r" style="left:1807.5px;top:520px;" width="13" height="8" viewBox="0 0 13 8" fill="none"><path d="M1.2 1.2L6.5 6.3L11.8 1.2" stroke="#444" stroke-width="1.4" fill="none" stroke-linecap="round" stroke-linejoin="round"/></svg>
<div class="r" style="left:1216px;top:549px;width:612px;height:1px;background:#e8e8e8;"></div>
<div class="t" style="left:1215.5px;top:567.24px;font-size:16.3px;line-height:16.3px;color:#505050;font-weight:400;">Flag</div>
<div class="t" style="left:1469.0px;top:566.65px;font-size:17px;line-height:17px;color:#111;font-weight:400;">Internal</div>
<svg class="r" style="left:1807.5px;top:570px;" width="13" height="8" viewBox="0 0 13 8" fill="none"><path d="M1.2 1.2L6.5 6.3L11.8 1.2" stroke="#444" stroke-width="1.4" fill="none" stroke-linecap="round" stroke-linejoin="round"/></svg>
<div class="r" style="left:1216px;top:599px;width:612px;height:1px;background:#e8e8e8;"></div>
<div class="t" style="left:525.0px;top:741.91px;font-size:17px;line-height:17px;color:#111;font-weight:400;">Comments</div>
<div class="t" style="left:612.0px;top:743.60px;font-size:15px;line-height:15px;color:#222;font-weight:400;">(1)</div>
<div class="t" style="left:664.0px;top:741.91px;font-size:17px;line-height:17px;color:#111;font-weight:400;letter-spacing:0.3px">Attachments</div>
<div class="t" style="left:767.5px;top:743.60px;font-size:15px;line-height:15px;color:#222;font-weight:400;">(1)</div>
<div class="t" style="left:819.0px;top:741.91px;font-size:17px;line-height:17px;color:#111;font-weight:400;">Log Hours</div>
<div class="t" style="left:901.5px;top:743.60px;font-size:15px;line-height:15px;color:#222;font-weight:400;">(7:00)</div>
<div class="t" style="left:974.0px;top:741.91px;font-size:17px;line-height:17px;color:#111;font-weight:400;">Link Bug</div>
<div class="t" style="left:1079.8px;top:741.91px;font-size:17px;line-height:17px;color:#111;font-weight:400;">Resolution</div>
<div class="t" style="left:1200.0px;top:741.91px;font-size:17px;line-height:17px;color:#111;font-weight:400;">Changesets</div>
<div class="t" style="left:1328.0px;top:741.91px;font-size:17px;line-height:17px;color:#111;font-weight:400;">Tasks</div>
<div class="t" style="left:1407.5px;top:741.91px;font-size:17px;line-height:17px;color:#111;font-weight:400;letter-spacing:0.5px">Activities</div>
<div class="t" style="left:1518.5px;top:741.91px;font-size:17px;line-height:17px;color:#111;font-weight:400;">Google Drive (2)</div>
<svg class="r" style="left:1676px;top:745px;" width="22" height="10" viewBox="0 0 22 10" fill="none"><circle cx="3.5" cy="5" r="2.3" fill="#222"/><circle cx="10" cy="5" r="2.3" fill="#222"/><circle cx="16.5" cy="5" r="2.3" fill="#222"/></svg>
<div class="r" style="left:663px;top:766px;width:122px;height:3px;background:#1f6fe5;border-radius:1px"></div>
<div class="r" style="left:500px;top:775px;width:1353px;height:390px;background:#ffffff;"></div>
<div class="r" style="left:539px;top:802px;width:251px;height:251px;background:#ffffff;border:1px solid #e6e6e6;border-radius:4px"></div>
<div class="r" style="left:540px;top:1018px;width:249px;height:1px;background:#e6e6e6;"></div>
<div class="t" style="left:551.0px;top:1028.90px;font-size:15px;line-height:15px;color:#111;font-weight:400;letter-spacing:-0.2px">Current_Plumbing_Lay...</div>
<svg class="r" style="left:760px;top:1025px;" width="20" height="19" viewBox="0 0 20 19" fill="none"><g stroke="#3a86f2" stroke-width="1.35" fill="none" stroke-linecap="round" stroke-linejoin="round"><path d="M1.8 9.6V14.8Q1.8 17.2 4.2 17.2H15.6Q18 17.2 18 14.8V9.6"/><path d="M9.9 1.8V11.8M6.4 8.4L9.9 11.9L13.4 8.4"/></g></svg>
<div class="r" style="left:536px;top:1080px;width:118px;height:34px;background:#2f7df6;border-radius:17px"></div>
<div class="t" style="left:555.0px;top:1089.45px;font-size:15.3px;line-height:15.3px;color:#fff;font-weight:400;">Attach Files</div>
<svg class="r" style="left:540px;top:810px;" width="250" height="190" viewBox="0 0 1618 1230" fill="none"><g stroke="#8a8a8a" stroke-width="15" stroke-linecap="square"><path d="M125 80L470 80"/><path d="M130 80L130 915"/><path d="M462 80L462 215"/><path d="M462 210L530 210"/><path d="M630 210L740 210"/><path d="M795 210L915 210"/><path d="M1020 210L1140 210"/><path d="M1235 210L1575 210"/><path d="M1570 210L1570 300"/><path d="M1570 420L1570 610"/><path d="M1570 820L1570 915"/><path d="M125 912L240 912"/><path d="M470 912L1575 912"/><path d="M140 215L270 215"/><path d="M345 215L460 215"/><path d="M130 555L340 555"/><path d="M455 215L455 565"/><path d="M455 560L710 560"/><path d="M710 440L710 560"/><path d="M830 215L830 550"/><path d="M800 550L830 550"/><path d="M800 550L800 630"/><path d="M800 820L800 915"/><path d="M1130 215L1130 440"/><path d="M1250 215L1250 440"/><path d="M1250 440L1320 440"/><path d="M1120 675L1280 675"/><path d="M1280 675L1280 910"/><path d="M130 920L130 1165"/><path d="M585 920L585 1165"/></g><g stroke="#9a9a9a" stroke-width="4"><path d="M130 1080L585 1080"/><path d="M130 1110L585 1110"/><path d="M130 1140L585 1140"/><path d="M130 1165L585 1165"/><path d="M140 125L250 125"/><path d="M150 195L215 195"/><path d="M150 225L215 225"/><path d="M150 430L215 430"/><path d="M40 455L130 455"/><path d="M40 540L130 540"/><path d="M40 455L40 540"/><path d="M470 300L830 300"/><path d="M600 230L690 230"/><path d="M600 230L600 420"/><path d="M690 230L690 420"/><path d="M1130 440L1250 440"/><path d="M1230 440L1230 550"/><path d="M245 920L245 1030"/><path d="M470 920L470 1030"/><path d="M480 710L640 710"/><path d="M720 430L720 520"/></g><g stroke="#8e3f74" stroke-width="6"><path d="M465 215L740 215"/><path d="M740 215L740 580"/><path d="M740 440L1110 440"/><path d="M1110 440L1110 910"/><path d="M1110 550L1560 550"/><path d="M1560 300L1560 910"/><path d="M1110 905L1280 905"/><path d="M835 215L1140 215"/><path d="M1240 215L1560 215"/><path d="M310 120L460 120"/><path d="M310 120L310 240"/><path d="M310 240L460 240"/><path d="M480 215L480 580"/><path d="M480 580L740 580"/><path d="M1270 700L1270 905"/></g><g fill="#111"><rect x="930" y="233" width="75" height="10"/><rect x="515" y="585" width="135" height="10"/><rect x="910" y="874" width="130" height="10"/><rect x="1535" y="315" width="13" height="90"/><rect x="1228" y="325" width="12" height="85"/><rect x="1533" y="650" width="13" height="140"/><rect x="1253" y="705" width="12" height="70"/><rect x="715" y="320" width="13" height="60"/><rect x="1290" y="960" width="32" height="25"/><rect x="1255" y="1000" width="67" height="45"/><rect x="955" y="1120" width="85" height="12"/><rect x="400" y="420" width="68" height="42"/><rect x="440" y="368" width="30" height="28"/><rect x="580" y="520" width="60" height="12"/></g><g stroke="#b0b0b0" stroke-width="5"><path d="M635 968L710 968"/><path d="M730 968L895 968"/><path d="M635 1002L710 1002"/><path d="M730 1002L895 1002"/><path d="M635 1036L710 1036"/><path d="M730 1036L895 1036"/><path d="M635 1070L710 1070"/><path d="M730 1070L895 1070"/><path d="M635 1104L710 1104"/><path d="M730 1104L895 1104"/><path d="M635 1138L710 1138"/><path d="M730 1138L895 1138"/><path d="M635 1172L710 1172"/><path d="M730 1172L895 1172"/><path d="M1055 970L1135 970"/><path d="M1340 970L1500 970"/><path d="M1055 1010L1135 1010"/><path d="M1340 1010L1500 1010"/><path d="M1055 1050L1135 1050"/><path d="M1340 1050L1500 1050"/><path d="M1055 1090L1135 1090"/><path d="M1340 1090L1500 1090"/><path d="M1055 1130L1135 1130"/><path d="M1340 1130L1500 1130"/><path d="M1055 1170L1135 1170"/><path d="M1340 1170L1500 1170"/><path d="M1055 1210L1135 1210"/><path d="M1340 1210L1500 1210"/></g><g stroke="#c06080" stroke-width="6"><path d="M635 968L710 968"/><path d="M635 1002L710 1002"/><path d="M635 1036L710 1036"/><path d="M635 1070L710 1070"/><path d="M635 1104L710 1104"/></g><g stroke="#888" stroke-width="5" fill="none"><path d="M150 455A80 80 0 0 1 230 540"/><path d="M245 1030A110 110 0 0 0 355 920"/><path d="M470 1030A110 110 0 0 1 360 920"/><path d="M1145 215A85 85 0 0 0 1230 300"/><path d="M1060 390L1120 350V440"/><path d="M1250 460L1320 495L1250 540"/><path d="M640 490L700 450V520"/><path d="M1130 560A80 80 0 0 0 1210 640"/><path d="M1185 675A60 60 0 0 1 1245 600"/><ellipse cx="650" cy="320" rx="38" ry="95"/><circle cx="515" cy="275" r="28"/><circle cx="770" cy="270" r="25"/><circle cx="800" cy="350" r="22"/><circle cx="175" cy="170" r="25"/><circle cx="1160" cy="745" r="22"/><circle cx="505" cy="390" r="20"/><rect x="470" y="450" width="95" height="95"/><path d="M470 450L565 545M565 450L470 545"/><rect x="1125" y="815" width="85" height="85"/><path d="M1125 815L1210 900M1210 815L1125 900"/><rect x="150" y="260" width="65" height="160"/></g><g stroke="#9a9a9a" stroke-width="4" fill="none"><path d="M55 455V540"/><path d="M70 455V540"/><path d="M85 455V540"/><path d="M100 455V540"/><path d="M115 455V540"/></g><g stroke="#777" stroke-width="5" fill="none"><circle cx="965" cy="968" r="14" stroke="#6a7fd0"/><circle cx="995" cy="968" r="14" stroke="#c05070"/><circle cx="1025" cy="968" r="14" stroke="#c05070"/><circle cx="1020" cy="1040" r="12"/><path d="M1000 1095L1020 1065L1040 1095Z"/><rect x="965" y="1150" width="70" height="25"/><rect x="965" y="1195" width="70" height="25"/><circle cx="1293" cy="1085" r="18"/><rect x="1270" y="1120" width="45" height="40"/><rect x="1265" y="1180" width="55" height="40"/></g><g fill="#111"><rect x="1005" y="1000" width="35" height="15"/></g></svg>
</div></body></html>
